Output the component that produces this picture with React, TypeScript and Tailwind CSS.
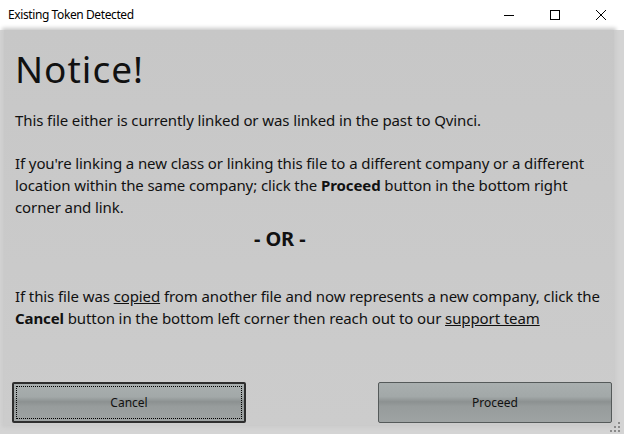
import React from 'react';

const font = { fontFamily: '"Noto Sans", "Open Sans", sans-serif' };

const WinButton: React.FC<{ label: string; focused?: boolean }> = ({ label, focused }) => (
  <button
    className={`relative w-[234px] h-[41px] rounded-[2px] text-[12px] text-[#111] bg-[linear-gradient(to_bottom,#a9afaf_0%,#a2a8a8_35%,#8c9191_48%,#979c9c_60%,#9ea3a3_100%)] ${
      focused ? 'border-2 border-[#2e2e2e]' : 'border border-[#555a5a]'
    }`}
  >
    {focused && <span className="absolute inset-[2px] border border-dotted border-black" />}
    {label}
  </button>
);

export default function App() {
  return (
    <div className="w-[624px] h-[434px] flex flex-col bg-[#d4d4d4] overflow-hidden" style={font}>
      {/* title bar */}
      <div className="h-[30px] bg-white flex items-center shrink-0">
        <span className="pl-[8px] text-[12px] tracking-[-0.4px] text-black flex-1">Existing Token Detected</span>
        <div className="flex h-full">
          <div className="w-[46px] h-full flex items-center justify-center">
            <svg width="10" height="10" viewBox="0 0 10 10"><path d="M0 5.5h10" stroke="#000" strokeWidth="1" /></svg>
          </div>
          <div className="w-[46px] h-full flex items-center justify-center">
            <svg width="10" height="10" viewBox="0 0 10 10"><rect x="0.5" y="0.5" width="9" height="9" fill="none" stroke="#000" strokeWidth="1" /></svg>
          </div>
          <div className="w-[46px] h-full flex items-center justify-center">
            <svg width="10" height="10" viewBox="0 0 10 10"><path d="M0 0L10 10M10 0L0 10" stroke="#000" strokeWidth="1" /></svg>
          </div>
        </div>
      </div>

      {/* body */}
      <div className="relative flex-1 pl-[4px] pr-[10px] pb-[9px]">
        <div className="h-full flex flex-col bg-[linear-gradient(to_bottom,#c7c7c7,#cccccc)] shadow-[0_0_4px_2px_#c9c9c9] pl-[11px] pr-[2px]">
          <h1 className="pt-[15px] text-[37px] leading-[48px] tracking-[1px] text-[#111]">Notice!</h1>
          <div className="mt-[16px] text-[15px] leading-[22px] tracking-[-0.1px] text-[#111] whitespace-nowrap">
            <p>This file either is currently linked or was linked in the past to Qvinci.</p>
            <p className="mt-[21px]">
              If you're linking a new class or linking this file to a different company or a different
              <br />
              location within the same company; click the <b>Proceed</b> button in the bottom right
              <br />
              corner and link.
            </p>
            <p className="mt-[8px] pl-[239px] text-[20px] leading-[26px] font-bold">- OR -</p>
            <p className="mt-[33px]">
              If this file was <u>copied</u> from another file and now represents a new company, click the
              <br />
              <b>Cancel</b> button in the bottom left corner then reach out to our <u>support team</u>
            </p>
          </div>
          <div className="mt-auto mb-[2px] -ml-[3px] flex justify-between">
            <WinButton label="Cancel" focused />
            <WinButton label="Proceed" />
          </div>
        </div>
        {/* resize grip */}
        <svg className="absolute right-[4px] bottom-[2px]" width="10" height="10" viewBox="0 0 10 10">
          <g fill="#8a8a8a">
            <rect x="8" y="0" width="2" height="2" />
            <rect x="4" y="4" width="2" height="2" />
            <rect x="8" y="4" width="2" height="2" />
            <rect x="0" y="8" width="2" height="2" />
            <rect x="4" y="8" width="2" height="2" />
            <rect x="8" y="8" width="2" height="2" />
          </g>
        </svg>
      </div>
    </div>
  );
}
